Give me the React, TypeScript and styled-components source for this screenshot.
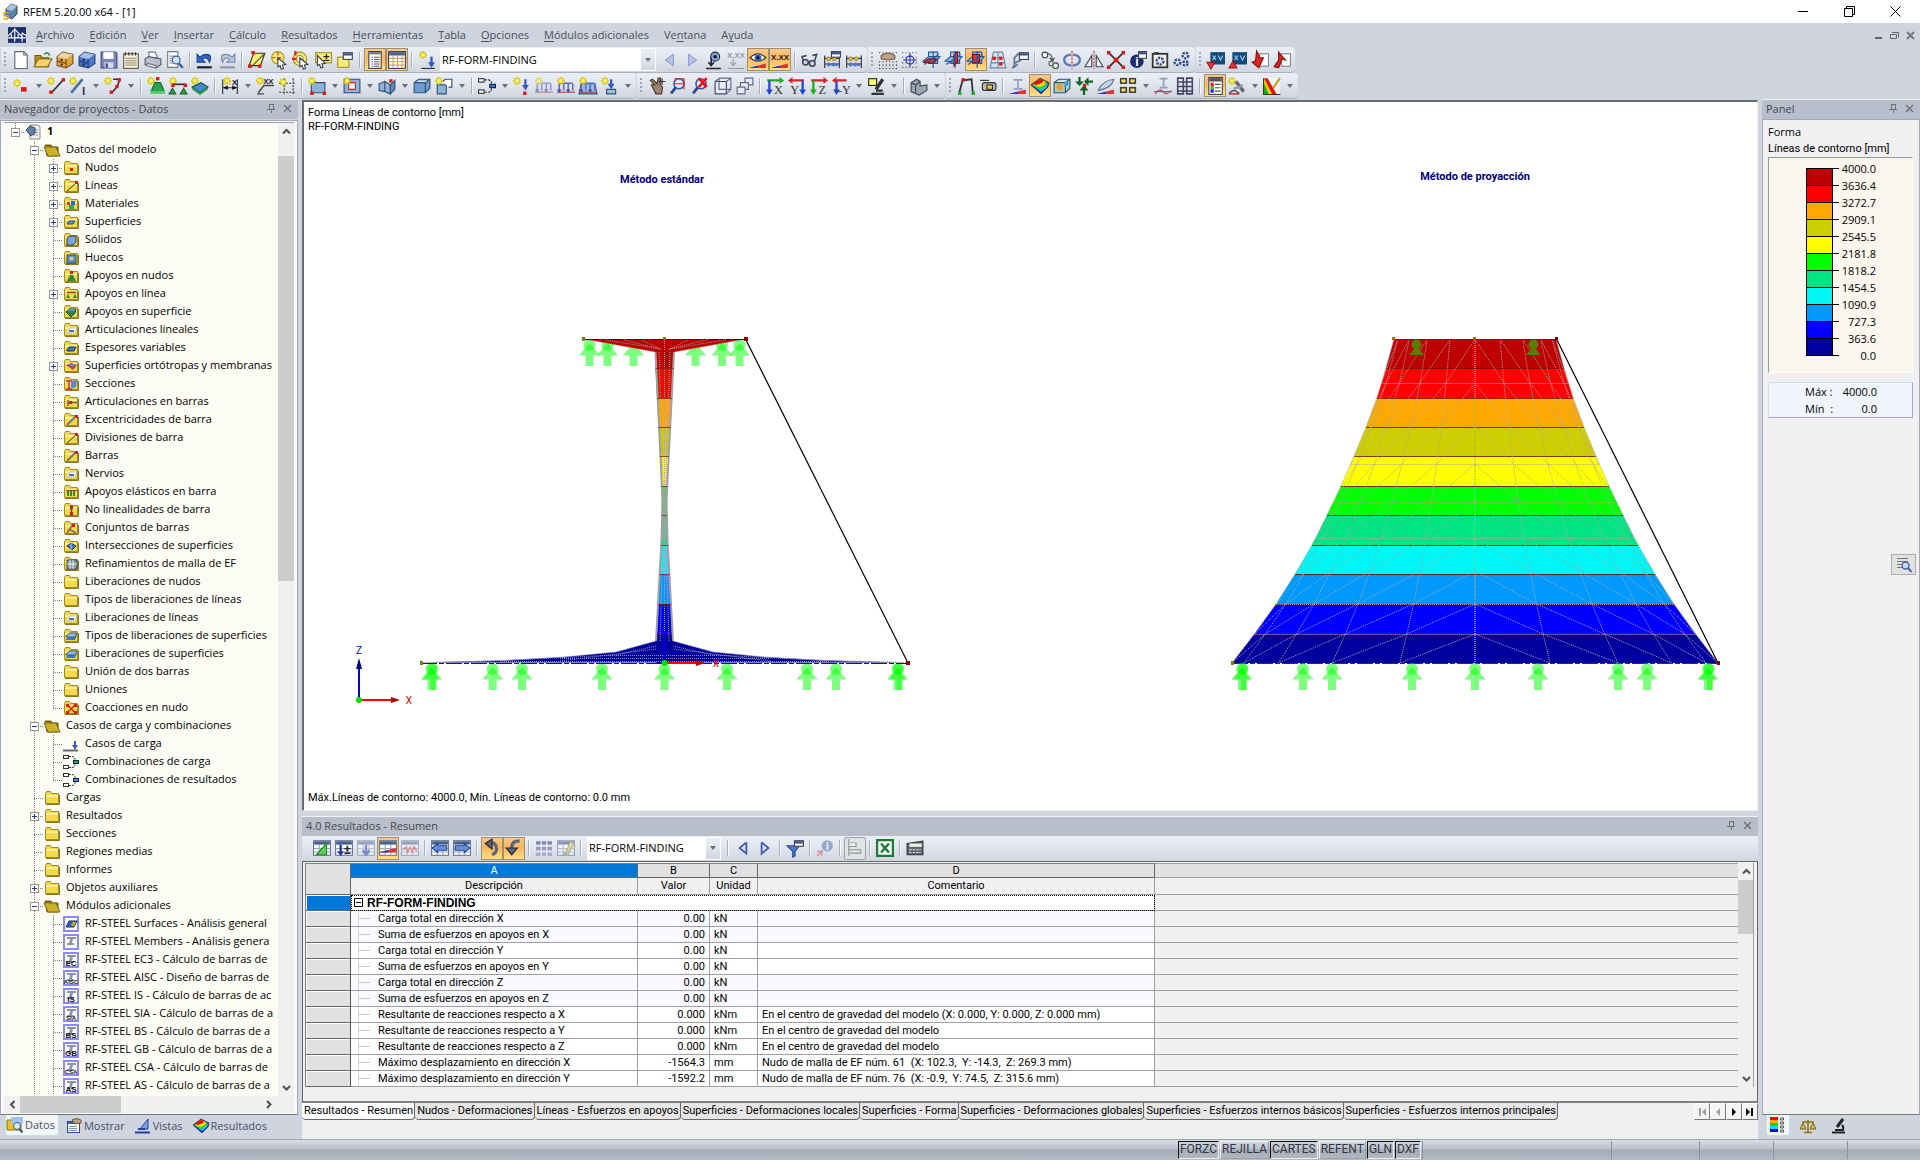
import React from 'react';
import type { ReactNode } from 'react';
import styled, { createGlobalStyle, css } from 'styled-components';

const UI = '"Open Sans", "Noto Sans", sans-serif';
const GRID = 'Roboto, "Liberation Sans", sans-serif';
const chrome = '#cfd4de';
const strip = 'linear-gradient(#e9eef7 0%, #e3e8f1 35%, #d0d5df 100%)';

const Global = createGlobalStyle`
  *, *::before, *::after { box-sizing: border-box; }
  body { margin: 0; background: ${chrome}; }
  button { font: inherit; color: inherit; background: none; border: 0; padding: 0; margin: 0; }
`;

/* ---------- icon primitives ---------- */

type Stroke = { d: string; c?: string; w?: number; dash?: string };
const L = ({ d, c = '#333', w = 1, dash }: Stroke) => (
  <path d={d} stroke={c} strokeWidth={w} strokeDasharray={dash} fill="none" />
);
const F = ({ d, c, s }: { d: string; c: string; s?: string }) => (
  <path d={d} fill={c} stroke={s} strokeWidth={s ? 1 : 0} />
);
const Star = ({ x = 0, y = 0 }: { x?: number; y?: number }) => (
  <g transform={`translate(${x} ${y})`}>
    <L d="M3.5 0v7M0 3.5h7M1 1l5 5M6 1l-5 5" c="#d8c400" w={1.3} />
    <rect x="2" y="2" width="3" height="3" fill="#fff36a" />
  </g>
);
const Node = ({ x, y, c = '#e01818' }: { x: number; y: number; c?: string }) => (
  <rect x={x} y={y} width="3" height="3" fill={c} />
);
const Lens = () => (
  <>
    <circle cx="8" cy="6" r="4.5" fill="#dfe9fb" stroke="#3a56a8" strokeWidth="1.4" />
    <L d="M5 9.5l-4 5" c="#2c4590" w={2.4} />
  </>
);
const Frame = ({ c = '#6a7890' }: { c?: string }) => (
  <>
    <rect x=".5" y="1.5" width="15" height="13" fill="#fff" stroke={c} />
    <rect x="1" y="2" width="14" height="3" fill="#47618f" />
    <L d="M1 8.5h14M1 11.5h14M5.5 5v9M10.5 5v9" c="#9aa6ba" />
  </>
);
const Tiny = ({ x = 8, y = 14, s = 8, c = '#223', children }: { x?: number; y?: number; s?: number; c?: string; children: ReactNode }) => (
  <text x={x} y={y} fontSize={s} fill={c} textAnchor="middle" fontWeight="700" fontFamily="Liberation Sans, sans-serif">{children}</text>
);
const Cabinet = ({ a, b }: { a: string; b: string }) => (
  <>
    <F d="M1 5l5-4 9 2v8l-6 4-8-2z" c={a} s={b} />
    <F d="M1 5l8 2 6-4-9-2z" c="#fff8" />
    <L d="M9 7v8M1 9l8 2" c={b} />
    <circle cx="5" cy="8" r="1" fill="#222" /><circle cx="5" cy="12" r="1" fill="#222" />
  </>
);
const Planes = ({ red }: { red: string }) => (
  <>
    <F d="M5 1h8v10H5z" c="#bcd9f2" s="#24589c" />
    <F d="M0 9l5-4h10l-4 5z" c="#8fbce4" s="#24589c" />
    <F d={red} c="#e33" s="#900" />
    <L d="M9 0v15M1 12l13-9" c="#24589c" />
  </>
);
const Support = ({ x = 8, y = 2 }: { x?: number; y?: number }) => (
  <g transform={`translate(${x} ${y})`}>
    <Node x={-1} y={-2} />
    <F d="M-2 3h5l3 7H-5z" c="#2ea44c" s="#176b2c" />
    <rect x="-6" y="10" width="13" height="3" fill="#57c873" />
  </g>
);
const AxisView = ({ t, d1, c1, d2, c2, a1, a2 }: { t: string; d1: string; c1: string; d2: string; c2: string; a1: string; a2: string }) => (
  <>
    <L d={d1} c={c1} w={2} /><L d={d2} c={c2} w={2} />
    <F d={a1} c={c1} /><F d={a2} c={c2} />
    <text x={t === 'Y' ? 6 : 11} y="15" fontSize="11" fill="#333" textAnchor="middle" fontFamily="Liberation Serif, serif">{t}</text>
  </>
);
const Rainbow = () => (
  <>
    <F d="M0 7l8-6 8 4-1 4-6 6z" c="#1030d0" />
    <F d="M1 7l7-5 7 4-1 3-5 4z" c="#10c8e8" />
    <F d="M1 7l7-5 6 3-1 3-5 3z" c="#30d020" />
    <F d="M1 6l7-4 5 2-1 3-5 2z" c="#ffe000" />
    <F d="M1 6l7-4 3 1-1 2-5 2z" c="#e01010" />
    <L d="M0 7l8-6 8 4-1 4-6 6z" c="#223" w={0.6} />
  </>
);
const Cube = ({ c = '#6d9bd0' }: { c?: string }) => (
  <>
    <F d="M1 5l4-3h10v8l-4 4H1z" c={c} s="#33506f" />
    <F d="M2 5l3-2h9l-3 2z" c="#dbe9f8" />
    <L d="M1 5h10v9M11 5l4-3" c="#33506f" />
  </>
);
const Gear = ({ x = 8, y = 8, r = 4 }: { x?: number; y?: number; r?: number }) => (
  <circle cx={x} cy={y} r={r} fill="#dfe6f2" stroke="#34508c" strokeWidth="2.2" strokeDasharray="2 1" />
);
const Combi = ({ c = '#2f7bd6' }: { c?: string }) => (
  <>
    <rect x=".5" y="1.5" width="5" height="3" fill="#fff" stroke="#333" />
    <rect x=".5" y="11.5" width="5" height="3" fill="#fff" stroke="#333" />
    <L d="M6 2.5h3q3 0 3 3.5M6 13.5h3q3 0 3-3.5" dash="2 1" />
    <rect x="10.5" y="6.5" width="5" height="3" fill={c} stroke="#124" />
  </>
);
const Loads = () => (
  <>
    <L d="M2 6v6M6 6v6M10 6v6M14 6v6M2 5.5h12" c="#5670c8" w={1.4} />
    <L d="M0 13.5h16" c="#c33" />
    <F d="M0 11h4l-2 3zM8 11h4l-2 3z" c="#3350b0" />
  </>
);
const Eye = () => (
  <>
    <F d="M1 6q7-7 14 0-7 6-14 0z" c="#fff" s="#333" />
    <circle cx="8" cy="6" r="3" fill="#2b62c8" /><circle cx="8" cy="6" r="1.2" fill="#000" />
  </>
);
const Wedge = ({ y = 11 }: { y?: number }) => (
  <>
    <F d={`M0 ${y + 4}L15 ${y}v4z`} c="#d33" />
    <F d={`M0 ${y + 4}L8 ${y + 2}v2z`} c="#2438c8" />
  </>
);
const Abacus = () => (
  <>
    <L d="M1.5 4v11M14.5 4v11M1 6.5h14M1 11.5h14" c="#333" />
    <circle cx="5" cy="7" r="1.8" fill="#e4b820" stroke="#765" strokeWidth=".5" /><circle cx="10" cy="7" r="1.8" fill="#e4b820" stroke="#765" strokeWidth=".5" />
    <circle cx="5" cy="12" r="1.8" fill="#4f74c8" /><circle cx="9" cy="12" r="1.8" fill="#4f74c8" /><circle cx="12" cy="12" r="1.5" fill="#4f74c8" />
  </>
);
const Folder = ({ open }: { open?: boolean }) => open ? (
  <>
    <F d="M1 3h6l1 2h6v9H3z" c="#8f7a14" s="#6d5c0c" />
    <F d="M0 5h12l4 9H4z" c="#cdb02a" s="#7c6a10" />
  </>
) : (
  <>
    <F d="M1.5 3.5l1-2h4l1 2h7v10h-13z" c="#f3da4c" s="#a08a24" />
    <F d="M2 5h12v2H2z" c="#fbee9a" />
    <L d="M2 14.5h13.5V5" c="#8c7718" />
  </>
);
const ModuleBox = ({ t }: { t?: string }) => (
  <>
    <rect x="1" y="1" width="14" height="14" fill="#fff" stroke="#8a8af0" strokeWidth="2" />
    {t === undefined ? (
      <><F d="M3 11l3-6h8l-3 6z" c="#2fa08c" s="#224" /><F d="M4 10l2-4h3l-2 4z" c="#3050d0" /><F d="M10 6h3l-2 4h-2z" c="#e0b020" /></>
    ) : (
      <>
        <F d="M4 3h9v2h-3l-1 4h2v2H4V9h2l1-4H4z" c="#8a96aa" />
        {t && <Tiny y={14} s={t.length > 2 ? 6 : 8} c="#111">{t}</Tiny>}
      </>
    )}
  </>
);

const icons: Record<string, ReactNode> = {
  app: <><F d="M4 5l5-5 6 2v8l-5 5-6-3z" c="#5f82a8" s="#33475c" /><F d="M4 5l5-5 6 2-5 5z" c="#a9c4dc" /><Tiny x={4} y={16} s={11} c="#d8a800">5</Tiny></>,
  bridge: <><rect y="1" width="16" height="14" fill="#1c2f6e" /><L d="M0 10.5h16M6 2v12M12.5 6v8M6 3L0 9M6 3l6 6M12.5 6l4 3M3 7v3M9 7v3" c="#fff" /></>,
  new: <><F d="M2.5.5h8l3 3v12h-11z" c="#fff" s="#667" /><L d="M10.5.5v3h3" c="#667" /></>,
  open: <><F d="M1 4h5l1 2h6v8H1z" c="#b8901c" s="#70560c" /><F d="M0 14l4-7h12l-4 7z" c="#f2d468" s="#8c6f18" /><L d="M9 3q3-3 5 1" c="#3a9a3a" w={1.6} /></>,
  cabY: <Cabinet a="#e0a43c" b="#7a5212" />,
  cabB: <Cabinet a="#4c78cc" b="#1f3c80" />,
  save: <><F d="M1 1h13l1 1v13H1z" c="#7a86b8" s="#454f80" /><rect x="3" y="1" width="9" height="6" fill="#fff" /><rect x="4" y="10" width="8" height="5" fill="#d3d8ea" /><rect x="5" y="11" width="2" height="4" fill="#454f80" /></>,
  note: <><rect x="1.5" y="2.5" width="13" height="13" fill="#f5efdc" stroke="#665c48" /><L d="M3 6.5h10M3 8.5h10M3 10.5h10M3 12.5h10" c="#a59a80" /><L d="M3 1v3M6 1v3M9 1v3M12 1v3" /></>,
  print: <><F d="M4 1h6l2 5H5z" c="#fff" s="#778" /><F d="M1 7l3-2 11 2v5l-4 3-10-3z" c="#b9c0cc" s="#556" /><F d="M3 11l8 2-1 2-8-2z" c="#f7f7f7" s="#778" /></>,
  preview: <><F d="M1.5.5h9v14h-9z" c="#fff" s="#778" /><L d="M3 4.5h5M3 6.5h4M3 8.5h4M3 10.5h4" c="#99a" /><circle cx="9" cy="8" r="3.5" fill="#cfe2f6" stroke="#2d5aa0" /><L d="M11.5 11l3.5 4" c="#2d5aa0" w={2} /></>,
  undo: <><F d="M1 3v7h7L5.5 7.5Q10 4 12 10 15 3 9 3 6 3 3.5 5.5z" c="#3467c8" s="#1b3f8c" /><L d="M1 14.5h13" c="#223" w={2} /></>,
  redo: <><F d="M15 3v7H8l2.5-2.5Q6 4 4 10 1 3 7 3q3 0 5.5 2.500z" c="#b9c8e2" s="#7388ac" /><L d="M2 14.5h13" c="#99a" w={2} /></>,
  para: <><F d="M5 2h10l-4 11H1z" c="#f8f06a" s="#333" /><L d="M2 15L15 2" c="#555" /><Node x={3} y={0} /><Node x={0} y={12} /><Node x={9} y={12} /></>,
  selA: <><circle cx="7" cy="6" r="5.5" fill="#f8ee78" stroke="#a89020" /><L d="M7 1v9M2 6h10" c="#d22" dash="3 2" /><F d="M7 6l7 6-3 .5 1 3-2 .5-1-3-2 1z" c="#fff" s="#444" /></>,
  selB: <><circle cx="7" cy="7" r="6" fill="#f8ee78" stroke="#a89020" /><circle cx="7" cy="7" r="3" fill="#fff" stroke="#a89020" /><L d="M3 0v4M0 7h4" c="#d22" w={2} /><F d="M7 6l7 6-3 .5 1 3-2 .5-1-3-2 1z" c="#fff" s="#444" /></>,
  selC: <><rect x="1.5" y="1.5" width="14" height="9" fill="#f8ee78" stroke="#a89020" /><Tiny x={11} y={9} s={10}>±</Tiny><F d="M3 4l7 7-3 .5 1 3-2 .5-1-3-2 1z" c="#fff" s="#444" /></>,
  selD: <><rect x="1.5" y="5.5" width="10" height="9" fill="#f8ee78" stroke="#a89020" /><rect x="6.5" y="1.5" width="8" height="6" fill="#fff" stroke="#445" /><rect x="7" y="2" width="7" height="2" fill="#334d90" /></>,
  listV: <><rect x="2.5" y=".5" width="11" height="15" fill="#fff" stroke="#444" /><rect x="3" y="1" width="10" height="2" fill="#777" /><L d="M5 5.5h1M5 7.5h1M5 9.5h1M5 11.5h1M5 13.5h1" c="#22a" /><L d="M7 5.5h5M7 7.5h5M7 9.5h5M7 11.5h5M7 13.5h5" c="#555" /></>,
  grid: <><rect x=".5" y=".5" width="15" height="15" fill="#fff" stroke="#445" /><rect x="1" y="1" width="14" height="3" fill="#4a6296" /><L d="M1 6.5h14M1 9.5h14M1 12.5h14M4.5 4v11M8.5 4v11M12.5 4v11" c="#c8a860" /></>,
  newLoad: <><Star x={1} y={0} /><L d="M3 15.5h12" /><L d="M12 5v7" c="#35c" w={2} /><F d="M9 10h6l-3 5z" c="#35c" /></>,
  prev: <F d="M11 3v10L4 8z" c="#b7c5e6" s="#8fa0cc" />,
  next: <F d="M5 3v10l7-5z" c="#b7c5e6" s="#8fa0cc" />,
  prevD: <L d="M11 3L5 8l6 5V3" c="#3a5cb4" w={1.6} />,
  nextD: <L d="M5 3l6 5-6 5V3" c="#3a5cb4" w={1.6} />,
  eyeLoad: <><circle cx="9" cy="5" r="4" fill="#7ea2dc" stroke="#234" /><circle cx="9" cy="5" r="1.5" fill="#112" /><L d="M5.5 6v6M3 10l2.5 3L8 10M1 15.5h13" c="#223" w={1.4} /></>,
  xxxGray: <><Tiny y={6} s={7} c="#999">X.XX</Tiny><L d="M5.5 7v6M3 10l2.5 3L8 10M1 15.5h14" c="#999" /></>,
  eyeRes: <><Eye /><Wedge /></>,
  xxxRes: <><Tiny y={8} s={7}>X.XX</Tiny><Wedge /></>,
  glasses: <><circle cx="4" cy="10" r="2.5" fill="#c9d4ec" stroke="#445" strokeWidth="1.4" /><circle cx="10" cy="11" r="2.5" fill="#c9d4ec" stroke="#445" strokeWidth="1.4" /><L d="M2 9l-1-4 4-1M12 9l2-6-4 1" c="#445" w={1.4} /></>,
  abacusWin: <><Abacus /><rect x="7.5" y=".5" width="8" height="5" fill="#fff" stroke="#445" /><rect x="8" y="1" width="7" height="2" fill="#334d90" /></>,
  abacus: <Abacus />,
  handGrid: <><L d="M0 1.5h16M0 9.5h16M0 12.5h16M0 15.5h16" c="#333" dash="1 2" /><F d="M2 4q6-4 12 0v3l-6 1-6-1z" c="#c0a488" s="#6b543e" /></>,
  snap: <><L d="M1 1.5h14M1 5.5h14M1 10.5h14M1 14.5h14" c="#555" dash="1 2" /><circle cx="8" cy="8" r="3.5" fill="#eef" stroke="#23a" /><L d="M8 2v12M2 8h12" c="#23a" /></>,
  planeA: <Planes red="M1 10l4-3h7l-3 4z" />,
  planeB: <Planes red="M8 3l3-2v9l-3 3z" />,
  planeC: <Planes red="M5 3h6v7H5z" />,
  guide: <><F d="M4 1h8l3 14H1z" c="#d5e6f2" s="#6688a0" /><L d="M3 6h10M2 10.5h12M8 1v14" c="#6688a0" /><Node x={3} y={5} /><Node x={9} y={10} /><Node x={9} y={5} /></>,
  lineGrid: <><L d="M3 15V6l4-4M3 11l6-3M1 15l5-3" c="#5a7a98" w={1.6} /><rect x="7.5" y="1.5" width="8" height="6" fill="#fff" stroke="#445" /><rect x="8" y="2" width="7" height="2" fill="#334d90" /></>,
  copy: <><circle cx="3.5" cy="3.5" r="2.5" fill="#fff" stroke="#444" /><circle cx="13" cy="13" r="2.5" fill="#eee" stroke="#444" /><L d="M6 2q4 1 4 6M8 6l2 3 2-3" c="#444" /><circle cx="9" cy="11" r="2" fill="#ddd" stroke="#666" /></>,
  rotate: <><L d="M7 3Q1 4 1 8t6 5M9 3q6 1 6 5t-6 5" c="#5877b8" w={2} /><L d="M8 0v16" c="#e22" dash="2 1" /></>,
  mirror: <><F d="M6 4v10H0z" c="#eef" s="#445" /><F d="M10 4v10h6z" c="#eef" s="#445" /><L d="M8 0v16" c="#e22" dash="2 1" /></>,
  redX: <><L d="M1 1l14 14M15 1L1 15" c="#333" w={1.5} /><Node x={0} y={0} /><Node x={13} y={0} /><Node x={0} y={13} /><Node x={13} y={13} /><rect x="6" y="6" width="4" height="4" fill="#e11" /></>,
  info: <><circle cx="7" cy="9" r="6" fill="#1f2b70" /><Tiny x={7} y={13} s={11} c="#fff">i</Tiny><rect x="8.5" y=".5" width="7" height="6" fill="#fff" stroke="#445" /><rect x="9" y="1" width="6" height="2" fill="#334d90" /></>,
  camera: <><rect x="1.5" y="2.5" width="13" height="12" fill="#f3efe6" stroke="#333" strokeWidth="1.6" /><Gear x={8} y={9} r={3} /><rect x="3" y="1" width="4" height="2" fill="#333" /></>,
  gears: <><Gear x={4} y={10} r={2.5} /><Gear x={11} y={4} r={2.5} /><Gear x={11} y={11} r={2} /></>,
  ifcA: <><rect x="3" y="1" width="13" height="11" fill="#174a78" /><L d="M5 4l3 4M8 4L5 8M10 4l2 4 2-4" c="#9cf" /><F d="M0 10h7l-3.5 6z" c="#e33" s="#a11" /></>,
  ifcB: <><rect x="3" y="1" width="13" height="11" fill="#174a78" /><L d="M5 4l3 4M8 4L5 8M10 4l2 4 2-4" c="#9cf" /><F d="M0 15h7L3.5 9z" c="#e33" s="#a11" /></>,
  impA: <><rect x="7.5" y="2.5" width="8" height="11" fill="#fff" stroke="#888" /><F d="M5 0l3 6h3l-4 9-6-5 3-1z" c="#d22" s="#811" /></>,
  impB: <><rect x="7.5" y="2.5" width="8" height="11" fill="#fff" stroke="#888" /><F d="M5 1l6 7-3-1-3 8-4-1 4-6z" c="#d22" s="#811" /></>,

  newNode: <><Star x={1} y={2} /><rect x="8" y="9" width="5" height="4" fill="#e01818" /></>,
  newLine: <><Star /><L d="M4 14L14 3" w={1.5} /><Node x={2} y={12} /><Node x={13} y={1} /></>,
  newMember: <><Star /><L d="M2 14L12 2" c="#7da0d0" w={3} /><L d="M2 14L12 2" c="#345" /><Tiny x={13} y={16} s={9} c="#225">I</Tiny></>,
  newPoly: <><Star /><L d="M8 2h6l-2 6-5 6" c="#333" w={1.4} /><Node x={12} y={1} /><Node x={10} y={7} /><Node x={5} y={12} /></>,
  supNode: <><Support x={9} /><Star /></>,
  supLine: <><Star /><L d="M3 6.5h12" w={1.5} /><Node x={2} y={6} /><Node x={13} y={6} /><F d="M3 10l3 5H0zM13 10l3 5h-6z" c="#2ea44c" s="#176b2c" /></>,
  supSurf: <><F d="M1 9l8-4 6 4-7 5z" c="#3e8ed0" s="#245" /><F d="M1 9l7 5v2L1 11zM8 14l7-5v2l-7 5z" c="#2ea44c" /><Star /></>,
  dim: <><L d="M1.5 2v13M14.5 2v13M2 9.5h12" /><F d="M2 9.5l4-2v4zM14 9.5l-4-2v4z" c="#111" /><Star x={2} y={0} /><Tiny x={12} y={7} s={7}>X</Tiny></>,
  dimXX: <><Star /><Tiny x={11} y={6} s={7}>XX</Tiny><L d="M2 14L7 7.5h9M1 15h6" c="#445" w={1.3} /></>,
  gridNew: <><L d="M5.5 1v15M13.5 1v15M1 5.5h15M1 13.5h15" c="#444" dash="2 1" /><Star x={1} y={1} /></>,
  surf: <><F d="M3 5h12v9H3z" c="#8fb4dc" s="#33506f" /><Star /><Node x={2} y={13} /><Node x={13} y={13} /></>,
  opening: <><F d="M1 2h14v12H1z" c="#8fb4dc" s="#33506f" /><F d="M5 5h6v6H5z" c="#fff" s="#d22" /><Star /></>,
  fold: <><F d="M1 6l5-2v9l-5-1zM6 4l5 3v8l-5-2z" c="#8fb4dc" s="#33506f" /><F d="M11 7l4-4v8l-4 4z" c="#5f88bc" s="#33506f" /><Node x={10} y={2} /></>,
  solid: <Cube />,
  solidNew: <><F d="M2 7h8v8H2z" c="#8fb4dc" s="#33506f" /><F d="M7 4l2-2h6v7h-3" c="#fff" s="#33506f" /><Star /></>,
  combi: <Combi />,
  loadNode: <><Star /><L d="M11 2v7" c="#35c" w={2} /><F d="M8 7h6l-3 5z" c="#35c" /><Node x={9} y={13} /></>,
  loadA: <g opacity=".6"><Loads /><Star /></g>,
  loadB: <><Loads /><Star /></>,
  loadC: <><F d="M2 6h12l2 9H0z" c="#9cc0e4" s="#33506f" /><Loads /><Star /></>,
  loadD: <><Star /><L d="M9 2v6" c="#35c" w={2} /><F d="M6 6h6L9 11z" c="#35c" /><F d="M5 11h8v4H5z" c="#9cc0e4" s="#33506f" /></>,
  hand: <><F d="M3 7l3 0-4-4 2-1 4 4 1-5 2 0v6l2 2-1 6H7z" c="#9a8470" s="#4c3c2e" /><L d="M12.5 1v6M9.5 4h6" /></>,
  zoomBox: <><Lens /><L d="M4 1.5h9M12.5 1v10M12 6H4" c="#d22" /></>,
  zoomX: <><Lens /><L d="M6 1l7 8M13 1L6 9" c="#e11" w={2.2} /></>,
  wire: <><F d="M1 4h10v11H1z" c="#e6edf8" s="#446" /><L d="M4.5 1v10h11M1 4l4-3h10v10l-4 4M11 4l4-3" c="#668" /></>,
  wires: <><F d="M8 1h7v6H8z" c="#e6edf8" s="#668" /><F d="M4 5h7v6H4z" c="#e6edf8" s="#668" /><F d="M1 9h7v6H1z" c="#e6edf8" s="#668" /></>,
  vx: <AxisView t="X" d1="M1 3h12" c1="#2a2" a1="M12 0l4 3-4 3z" d2="M3 3v10" c2="#24c" a2="M0 11h6l-3 5z" />,
  vy: <AxisView t="Y" d1="M3 3h11" c1="#d22" a1="M4 0L0 3l4 3z" d2="M13 3v10" c2="#24c" a2="M10 11h6l-3 5z" />,
  vz: <AxisView t="Z" d1="M1 3h12" c1="#d22" a1="M12 0l4 3-4 3z" d2="M3 3v10" c2="#2a2" a2="M0 11h6l-3 5z" />,
  vmy: <AxisView t="-Y" d1="M4 3h9" c1="#d22" a1="M4 0L0 3l4 3z" d2="M4 3v10" c2="#24c" a2="M1 11h6l-3 5z" />,
  scope: <><rect x="1.5" y="1.5" width="7" height="6" fill="#ff6" stroke="#222" /><L d="M14 2L8 11" c="#333" w={3} /><L d="M8 12h6M4 15h11" c="#333" w={2} /></>,
  block: <><F d="M1 5l5-3 3 2v4l6-1v5l-7 4-7-3z" c="#9aa8b4" s="#445" /><L d="M1 5l4 2v8M5 7l4-3" c="#445" /></>,
  frameN: <><L d="M2 14L5 3l8-1 1 12" w={1.6} /><Node x={1} y={13} c="#2a2" /><Node x={13} y={13} c="#2a2" /><Node x={4} y={1} /></>,
  roller: <><rect x="3" y="5" width="12" height="7" rx="2" fill="#bbb" stroke="#333" /><rect x="7" y="7" width="5" height="4" fill="#d8d030" stroke="#333" /><L d="M1 3h8" /></>,
  deform: <><L d="M4 2.5h8M8 3v7M4 10.5h8" c="#8fa0c0" w={1.5} /><Wedge /></>,
  rainbow: <Rainbow />,
  cubeRes: <><Cube c="#9fd8b8" /><circle cx="6" cy="9" r="3" fill="#e8a040" /><circle cx="12" cy="6" r="2" fill="#40a0e0" /></>,
  reaction: <><L d="M8 16V9" c="#162" w={2} /><F d="M4 12h8L8 7zM0 4h8L4 8zM12 0v8l-4-4z" c="#162" /><L d="M4 0v5M11 4h5" c="#162" w={2} /><Node x={7} y={6} /></>,
  slice: <><F d="M1 12Q5 3 15 2q-2 8-14 10z" c="#c6d4e8" s="#678" /><Wedge /></>,
  quad: <><rect x="1.5" y="1.5" width="5" height="4" fill="#f0dc70" stroke="#443" strokeWidth="1.4" /><rect x="9.5" y="1.5" width="5" height="4" fill="#f0dc70" stroke="#443" strokeWidth="1.4" /><rect x="1.5" y="9.5" width="5" height="4" fill="#f0dc70" stroke="#443" strokeWidth="1.4" /><rect x="9.5" y="9.5" width="5" height="4" fill="#f0dc70" stroke="#443" strokeWidth="1.4" /></>,
  moment: <><L d="M5 1.5h7M8.5 2v7M5 9.5h7" c="#8fa0c0" w={1.5} /><L d="M0 13h16" c="#46a" /><L d="M1 15q4-6 7-2t7-1" c="#c44" /></>,
  cells: <><L d="M1.5 1h5v14h-5zM9.5 1h5v14h-5zM1 4.5h14M1 8.5h14M1 12.5h14" c="#446" w={1.4} /></>,
  panel: <><rect x="2.5" y=".5" width="12" height="15" fill="#fff" stroke="#445" /><rect x="3" y="1" width="11" height="3" fill="#555" /><rect x="4" y="5" width="3" height="3" fill="#e22" /><rect x="4" y="8" width="3" height="3" fill="#2c2" /><rect x="4" y="11" width="3" height="3" fill="#22e" /><L d="M8 6.5h5M8 9.5h5M8 12.5h5" c="#555" /></>,
  starTool: <><Star /><L d="M7 4l7 9" c="#667" w={3} /><L d="M5 10q5 0 8-3" c="#99a" w={2} /><L d="M1 15q4-6 9 0" c="#556" w={1.5} /><L d="M1 15h9" c="#c44" w={1.5} /></>,
  colors: <><rect x="1" y="1" width="14" height="14" fill="#f4f4f4" /><F d="M1 1l8 14H5L1 8z" c="#f0d000" /><F d="M1 1h3l8 14H8z" c="#d11" /><F d="M1 6l4 9H1z" c="#1a1" /><L d="M15 1L9 10" c="#c8a020" w={2} /><L d="M.5 1v14.5h15" /></>,

  tA: <><Frame /><F d="M12 4v10H3z" c="#5cd25c" s="#282" /></>,
  tB: <><Frame /><Tiny x={11} y={13} s={11}>±</Tiny><L d="M5 5v7" c="#23a" w={2} /><F d="M2 11h6l-3 4z" c="#23a" /></>,
  tC: <g opacity=".5"><Frame /><L d="M8 5v8M5 10l3 4 3-4" c="#23a" w={2} /></g>,
  tD: <><Frame /><Wedge y={8} /></>,
  tE: <g opacity=".5"><Frame /><L d="M2 10l2-3 2 5 2-5 2 5 2-5 2 4" c="#d22" /></g>,
  tL: <><Frame /><F d="M1 8l5-4v2h8v4H6v2z" c="#6d8fd8" s="#234a98" /></>,
  tR: <><Frame /><F d="M15 8l-5-4v2H2v4h8v2z" c="#6d8fd8" s="#234a98" /></>,
  hookA: <><L d="M6 3q6 0 6 6 0 3-4 5" c="#5c6880" w={3} /><F d="M2 4l6-4v9z" c="#5c6880" s="#223" /></>,
  hookB: <><L d="M13 2Q6 1 6 8" c="#5c6880" w={3} /><F d="M1 8h10l-5 6z" c="#5c6880" s="#223" /></>,
  rowsB: <g opacity=".6"><rect x="1" y="2" width="14" height="3" fill="#448" /><rect x="1" y="7" width="14" height="3" fill="#66a" /><rect x="1" y="12" width="14" height="3" fill="#88b" /><L d="M5.5 2v13M10.5 2v13" c="#fff" /></g>,
  rowsY: <g opacity=".6"><Frame /><F d="M12 2l3 2-5 9-5 1 3-2z" c="#e4d060" s="#886" /></g>,
  filter: <><F d="M1 6h11L8 11v4l-2 1v-5z" c="#4f7cc8" s="#234a98" /><rect x="7.5" y="1.5" width="8" height="5" fill="#fff" stroke="#445" /><rect x="8" y="2" width="7" height="2" fill="#334d90" /></>,
  infoG: <g opacity=".5"><circle cx="10" cy="6" r="5" fill="#56a" /><Tiny x={10} y={10} s={10} c="#fff">i</Tiny><L d="M1 15l5-5M1 11h4v4" c="#c33" /></g>,
  chart: <g opacity=".6"><L d="M2.5 0v15M2 3.5h7v3H2M2 9.5h11v3H2" c="#666" /><rect x="3" y="4" width="5" height="2" fill="#fff" /></g>,
  excel: <><rect x="1" y="1" width="14" height="14" fill="#fff" stroke="#1c7a34" strokeWidth="2" /><L d="M4.5 4l7 8M11.5 4l-7 8" c="#1c7a34" w={2.2} /></>,
  calc: <><F d="M1 4l14-2v12H1z" c="#60666e" s="#333" /><rect x="3" y="4" width="11" height="3" fill="#e6eee6" /><L d="M3 9.5h10M3 12h10" c="#eee" dash="2 1" /></>,

  root: <><F d="M5 1h8l2 2v12H5z" c="#f2f2f2" s="#888" /><L d="M8 6h5M8 8.5h5M8 11h5" c="#999" /><F d="M1 6l4-4 5 2v5L6 12z" c="#5f82a8" s="#33475c" /></>,
  fOpen: <Folder open />,
  loadCase: <><L d="M0 14.5h15" c="#667" w={2} /><L d="M12 5v6" c="#3a5fb8" w={2} /><F d="M9 9h6l-3 5z" c="#3a5fb8" /></>,
  combG: <Combi c="#22b14c" />,
  combB: <Combi c="#4f93e8" />,
  mDatos: <><F d="M0 3h14v10H0z" c="#f0c030" s="#8c7018" /><rect x="4" y="0" width="12" height="7" fill="#9cc4f0" /><circle cx="10" cy="9" r="3.5" fill="#dcebfa" stroke="#357" /><L d="M12.5 12l3 3.5" c="#357" w={2} /></>,
  mMostrar: <><rect x="1.5" y="3.5" width="12" height="11" fill="#fff" stroke="#2c4c90" /><rect x="2" y="4" width="11" height="2" fill="#3a62b0" /><L d="M3 8.5h8M3 10.5h8M3 12.5h8" c="#69b" /><F d="M6 2q5-3 9 0v3l-6 1z" c="#c0a080" s="#6b543e" /></>,
  mVistas: <><F d="M13 1L5 11h8z" c="#7da0ec" s="#2440a0" /><L d="M0 14.5h15M3 11h7" c="#2440a0" w={2} /></>,
  scale: <g><L d="M8 2v12M2 4h12M4 14.5h8" c="#8a7210" w={1.6} /><F d="M3 5l3 6H0zM13 5l3 6h-6z" c="#d8bc40" s="#7a6410" /></g>,
  micro: <><L d="M13 1L7 9" c="#222" w={3} /><L d="M5 12h8q1-3-1-5" c="#222" w={2} /><L d="M2 14.5h13" c="#222" w={2} /></>,
  legend: <><rect x="0" y="0" width="8" height="3" fill="#f00" /><rect x="0" y="3" width="8" height="3" fill="#fa0" /><rect x="0" y="6" width="8" height="3" fill="#0d0" /><rect x="0" y="9" width="8" height="3" fill="#0df" /><rect x="0" y="12" width="8" height="3" fill="#00f" /><L d="M10.5 1h3v2h-3zM10.5 5h3v2h-3zM10.5 9h3v2h-3zM10.5 13h3v2h-3z" c="#555" /></>,
  listLens: <><L d="M1 1.5h11M1 4.5h11M1 7.5h6M1 10.5h6" c="#777" /><circle cx="9.5" cy="8.5" r="3.5" fill="#c7d8f4" stroke="#4a64a8" strokeWidth="1.4" /><L d="M12 11l3.5 4" c="#4a64a8" w={2} /></>,
};

/* small emblems drawn over the yellow tree folders */
const marks: Record<string, ReactNode> = {
  none: null,
  node: <Node x={7} y={8} />,
  line: <><L d="M4 13L13 5" /><Node x={12} y={3} /></>,
  mat: <><rect x="4" y="6" width="3" height="3" fill="#e33" /><rect x="8" y="5" width="4" height="4" fill="#36c" /><rect x="6" y="9" width="5" height="4" fill="#2a6" /></>,
  surf: <F d="M4 10l2-3h6l-2 3z" c="#5c94d8" s="#346" />,
  solid: <F d="M4 6l3-2h6v6l-3 3H4z" c="#7ba6dc" s="#345" />,
  hole: <><F d="M4 5h9v8H4z" c="#5c94d8" s="#345" /><rect x="7" y="7" width="3" height="3" fill="#f3da4c" /></>,
  supN: <><F d="M7 7h3l3 6H4z" c="#2a8c3c" /><Node x={7} y={3} /></>,
  supL: <><L d="M4 6.5h9" c="#a33" w={1.5} /><F d="M5 8l2 4H3zM12 8l2 4h-4z" c="#2a8c3c" /></>,
  supS: <><F d="M3 8l3-3h7l-1 4-4 4z" c="#2a8c3c" s="#143" /><F d="M4 7l2-2h7l-2 2z" c="#5c94d8" /></>,
  hinge: <><F d="M3 11l4-5h7l-2 5z" c="#fff" s="#bbb" /><L d="M6 9h5" c="#56a" w={2} /></>,
  slab: <F d="M4 10l2-3h7l-2 4H4z" c="#3f78c0" s="#235" />,
  ortho: <><F d="M3 7l5-2 6 2-4 5z" c="#d33" /><F d="M4 6h9l-3 3z" c="#5c94d8" /></>,
  section: <><L d="M3 5h6M6 5v8M3 13h6" c="#c33" w={1.5} /><F d="M8 5l6-1-1 7-5 2z" c="#5c84e0" /></>,
  rod: <><L d="M4 13L13 4" c="#777" w={2.2} /><Node x={12} y={3} /></>,
  rodH: <><L d="M5 8.500h9M5 6v6" c="#665" w={1.5} /><Node x={6} y={7} /></>,
  elastic: <><L d="M3 6.5h11" c="#a33" /><L d="M5 7v5M8 7v5M11 7v5" c="#2a8c3c" w={2} /></>,
  nonlin: <><L d="M8.5 3v11" c="#446" w={1.5} /><Node x={7} y={4} /><Node x={7} y={10} /></>,
  set: <><L d="M4 13L10 4M6 9l7 4" c="#866" w={1.6} /><Node x={9} y={4} /></>,
  inter: <><F d="M4 8l4-3 5 3-4 4z" c="#3f78c0" s="#235" /><L d="M8 4v9" c="#9cf" /></>,
  mesh: <><F d="M4 4h10v9H4z" c="#89a" s="#345" /><L d="M7 4v9M10 4v9M4 8h10" c="#eee" /></>,
  relS: <><F d="M3 11l4-4h7l-2 5H3z" c="#3f78c0" /><F d="M3 8l4-3h7l-2 4H3z" c="#8fc0ec" s="#457" /></>,
  coac: <><L d="M4 4l8 9M13 4l-9 9" c="#d22" w={1.6} /><Node x={3} y={4} /><Node x={11} y={4} /><Node x={3} y={11} /><Node x={11} y={11} /></>,
};

const Svg = styled.svg<{ $s: number }>`
  width: ${p => p.$s}px;
  height: ${p => p.$s}px;
  flex: none;
  display: block;
  overflow: visible;
`;
const Icon = ({ n, s = 16 }: { n: string; s?: number }) => (
  <Svg $s={s} viewBox="0 0 16 16" aria-hidden="true">
    {n.startsWith('f:') ? <><Folder />{marks[n.slice(2)]}</> : n.startsWith('m:') ? <ModuleBox t={n.slice(2)} /> : n === 'm' ? <ModuleBox /> : icons[n]}
  </Svg>
);

/* ---------- window frame ---------- */

const Window = styled.div`
  height: 100vh;
  min-height: 700px;
  display: flex;
  flex-direction: column;
  overflow: hidden;
  background: ${chrome};
  font: 11px/16px ${UI};
  color: #000;
`;
const TitleBar = styled.header`
  height: 23px;
  flex: none;
  display: flex;
  align-items: center;
  gap: 5px;
  padding: 0 19px 0 2px;
  background: #fff;
`;
const Title = styled.h1`
  margin: 0;
  font: inherit;
  flex: 1;
`;
const WindowButtons = styled.div<{ $gap: number }>`
  display: flex;
  align-items: center;
  gap: ${p => p.$gap}px;
`;
const Plain = styled.button`
  display: flex;
  align-items: center;
  justify-content: center;
`;
const MenuBar = styled.nav`
  height: 24px;
  flex: none;
  display: flex;
  align-items: center;
  padding: 0 5px 0 4px;
  color: #4a4f59;
`;
const MenuItem = styled.button`
  padding: 0 7px 0 8px;
  height: 20px;
  u { text-underline-offset: 2px; }
`;
const MenuLogo = styled.span`
  display: flex;
  margin: 0 2px 0 4px;
`;
const Spacer = styled.span` flex: 1; `;

const Grip = styled.span`
  width: 4px;
  height: 16px;
  margin: 0 2px 0 3px;
  flex: none;
  background: radial-gradient(circle at 1px 1px, #9ea5b3 1px, transparent 1px) 0 0 / 4px 4px;
`;

/* ---------- toolbars ---------- */

const ToolRow = styled.div`
  display: flex;
  gap: 1px;
  height: 26px;
  flex: none;
  padding-left: 1px;
`;
const ToolStrip = styled.div`
  display: flex;
  align-items: center;
  height: 26px;
  padding-right: 2px;
  background: ${strip};
  border-bottom: 1px solid #aab0bd;
  border-radius: 0 4px 4px 0;
`;
const ToolButton = styled.button<{ $on?: boolean; $off?: boolean }>`
  width: 22px;
  height: 23px;
  flex: none;
  display: flex;
  align-items: center;
  justify-content: center;
  border: 1px solid transparent;
  ${p => p.$on && css`
    border-color: #9c8f72;
    background: linear-gradient(#fbc88a, #fcb65c 45%, #ffe184);
  `}
  ${p => p.$off && css`
    border-color: #9aa2a6;
    border-radius: 2px;
    background: #dfe4e4;
  `}
`;
const Drop = styled.button`
  width: 13px;
  height: 22px;
  flex: none;
  display: flex;
  align-items: center;
  justify-content: center;
`;
const Sep = styled.span`
  width: 2px;
  height: 16px;
  margin: 0 3px;
  flex: none;
  border-left: 1px solid #a9afbb;
  border-right: 1px solid #f6f8fb;
`;
const Combo = styled.span<{ $w: number }>`
  display: flex;
  width: ${p => p.$w}px;
  height: 23px;
  margin: 0 3px 0 2px;
  background: #fff;
  border: 1px solid #fff;
`;
const Select = styled.select`
  flex: 1;
  min-width: 0;
  appearance: none;
  border: 0;
  padding: 0 1px;
  background: #fff;
  color: #000;
  font: 11px/16px ${UI};
`;
const ComboArrow = styled.span`
  width: 14px;
  display: flex;
  align-items: center;
  justify-content: center;
  background: ${strip};
`;
const Caret = () => <svg width="6" height="4" aria-hidden="true"><path d="M0 0h6L3 4z" fill="#6b7078" /></svg>;

const ToolItems = ({ spec }: { spec: string }) => (
  <>
    {spec.split(' ').map((t, i) => {
      if (t === '|') return <Sep key={i} />;
      if (t === ':') return <Grip key={i} />;
      if (t === 'v') return <Drop key={i} aria-label="Más opciones"><Caret /></Drop>;
      if (t.startsWith('combo')) {
        return (
          <Combo key={i} $w={Number(t.slice(5))}>
            <Select aria-label="Caso de carga" defaultValue="RF-FORM-FINDING"><option>RF-FORM-FINDING</option></Select>
            <ComboArrow><Caret /></ComboArrow>
          </Combo>
        );
      }
      const n = t.replace(/[*~]$/, '');
      return <ToolButton key={i} $on={t.endsWith('*')} $off={t.endsWith('~')} aria-label={n}><Icon n={n} s={18} /></ToolButton>;
    })}
  </>
);

const row1 = [
  ': new open cabY cabB save note print preview | undo redo | para selA selB selC selD | listV* grid* | newLoad combo216 prev next eyeLoad xxxGray eyeRes* xxxRes* | glasses abacusWin abacus',
  ': handGrid snap planeA planeB planeC* guide lineGrid | copy rotate mirror redX info camera gears',
  ': ifcA ifcB impA impB',
];
const row2 = [
  ': newNode v newLine newMember v newPoly v | supNode supLine supSurf | dim v dimXX gridNew | surf v opening v fold v solid solidNew v | combi v loadNode loadA loadB loadC loadD v',
  ': hand zoomBox zoomX wire wires | vx vy vz vmy v scope v | block v',
  ': frameN roller | deform rainbow* cubeRes reaction slice quad v moment cells | panel* starTool v colors v',
];

/* ---------- docks ---------- */

const Main = styled.main`
  flex: 1;
  min-height: 0;
  display: grid;
  grid-template-columns: 298px minmax(0, 1fr) 158px;
  column-gap: 4px;
`;
const Dock = styled.section`
  display: flex;
  flex-direction: column;
  min-height: 0;
  min-width: 0;
`;
const DockHeader = styled.div`
  height: 20px;
  flex: none;
  display: flex;
  align-items: center;
  gap: 8px;
  padding: 0 6px 2px 4px;
  background: #b9bfca;
  border-top: 1px solid #eef1f7;
  color: #44474d;
`;
const DockTitle = styled.h2`
  margin: 0;
  font: inherit;
  flex: 1;
`;
const DockHead = ({ children }: { children: ReactNode }) => (
  <DockHeader>
    <DockTitle>{children}</DockTitle>
    <Plain aria-label="Fijar"><svg width="8" height="9"><path d="M2.5 0v5.5M6.5 0v5.5M2 .5h4M0 5.5h8M4.5 6v3" stroke="#6c7078" fill="none" /></svg></Plain>
    <Plain aria-label="Cerrar"><svg width="9" height="9"><path d="M1 1l7 7M8 1L1 8" stroke="#6c7078" strokeWidth="1.4" /></svg></Plain>
  </DockHeader>
);

/* ---------- tree ---------- */

const TreeFrame = styled.div`
  flex: 1;
  min-height: 0;
  margin-top: 1px;
  padding: 1px 3px 1px;
  display: flex;
  flex-direction: column;
  border: 1px solid #a4a9b6;
  border-bottom-color: #777;
  background: #f8f9fb;
`;
const TreeBox = styled.div`
  flex: 1;
  min-height: 0;
  display: grid;
  grid-template-columns: minmax(0, 1fr) 16px;
  border-top: 1px solid #9a9ea8;
`;
const TreeList = styled.ul`
  margin: 0;
  padding: 0 0 0 2px;
  list-style: none;
  overflow: hidden;
  background: #fdfcf4;
`;
const TreeRow = styled.li`
  display: flex;
  align-items: center;
  height: 18px;
  white-space: nowrap;
`;
const dotsV = 'repeating-linear-gradient(#7d7d7d 0 1px, transparent 1px 2px)';
const dotsH = 'repeating-linear-gradient(90deg, #7d7d7d 0 1px, transparent 1px 2px)';
const Guide = styled.span<{ $v: string; $h?: boolean }>`
  width: 19px;
  height: 18px;
  flex: none;
  display: flex;
  align-items: center;
  justify-content: center;
  background-repeat: no-repeat;
  background-image: ${dotsV}, ${dotsH};
  background-size: 1px ${p => p.$v}, ${p => (p.$h ? '10px' : '0')} 1px;
  background-position: 9px 0, 9px 9px;
`;
const Expander = styled.button`
  width: 9px;
  height: 9px;
  display: flex;
  align-items: center;
  justify-content: center;
  border: 1px solid #969696;
  background: #fdfdfd;
`;
const TreeLabel = styled.span<{ $strong?: boolean }>`
  padding: 0 0 2px 6px;
  font-weight: ${p => (p.$strong ? 700 : 400)};
`;

type TreeItem = [depth: number, mark: '' | '+' | '-', icon: string, label: string];
const tree: TreeItem[] = [
  [0, '-', 'root', '1'],
  [1, '-', 'fOpen', 'Datos del modelo'],
  [2, '+', 'f:node', 'Nudos'],
  [2, '+', 'f:line', 'Líneas'],
  [2, '+', 'f:mat', 'Materiales'],
  [2, '+', 'f:surf', 'Superficies'],
  [2, '', 'f:solid', 'Sólidos'],
  [2, '', 'f:hole', 'Huecos'],
  [2, '', 'f:supN', 'Apoyos en nudos'],
  [2, '+', 'f:supL', 'Apoyos en línea'],
  [2, '', 'f:supS', 'Apoyos en superficie'],
  [2, '', 'f:hinge', 'Articulaciones lineales'],
  [2, '', 'f:slab', 'Espesores variables'],
  [2, '+', 'f:ortho', 'Superficies ortótropas y membranas'],
  [2, '', 'f:section', 'Secciones'],
  [2, '', 'f:rodH', 'Articulaciones en barras'],
  [2, '', 'f:rod', 'Excentricidades de barra'],
  [2, '', 'f:line', 'Divisiones de barra'],
  [2, '', 'f:rod', 'Barras'],
  [2, '', 'f:hinge', 'Nervios'],
  [2, '', 'f:elastic', 'Apoyos elásticos en barra'],
  [2, '', 'f:nonlin', 'No linealidades de barra'],
  [2, '', 'f:set', 'Conjuntos de barras'],
  [2, '', 'f:inter', 'Intersecciones de superficies'],
  [2, '', 'f:mesh', 'Refinamientos de malla de EF'],
  [2, '', 'f:none', 'Liberaciones de nudos'],
  [2, '', 'f:none', 'Tipos de liberaciones de líneas'],
  [2, '', 'f:hinge', 'Liberaciones de líneas'],
  [2, '', 'f:relS', 'Tipos de liberaciones de superficies'],
  [2, '', 'f:relS', 'Liberaciones de superficies'],
  [2, '', 'f:none', 'Unión de dos barras'],
  [2, '', 'f:none', 'Uniones'],
  [2, '', 'f:coac', 'Coacciones en nudo'],
  [1, '-', 'fOpen', 'Casos de carga y combinaciones'],
  [2, '', 'loadCase', 'Casos de carga'],
  [2, '', 'combG', 'Combinaciones de carga'],
  [2, '', 'combB', 'Combinaciones de resultados'],
  [1, '', 'f:none', 'Cargas'],
  [1, '+', 'f:none', 'Resultados'],
  [1, '', 'f:none', 'Secciones'],
  [1, '', 'f:none', 'Regiones medias'],
  [1, '', 'f:none', 'Informes'],
  [1, '+', 'f:none', 'Objetos auxiliares'],
  [1, '-', 'fOpen', 'Módulos adicionales'],
  [2, '', 'm', 'RF-STEEL Surfaces - Análisis general'],
  [2, '', 'm:', 'RF-STEEL Members - Análisis genera'],
  [2, '', 'm:EC', 'RF-STEEL EC3 - Cálculo de barras de'],
  [2, '', 'm:AISC', 'RF-STEEL AISC - Diseño de barras de'],
  [2, '', 'm:IS', 'RF-STEEL IS - Cálculo de barras de ac'],
  [2, '', 'm:SIA', 'RF-STEEL SIA - Cálculo de barras de a'],
  [2, '', 'm:BS', 'RF-STEEL BS - Cálculo de barras de a'],
  [2, '', 'm:GB', 'RF-STEEL GB - Cálculo de barras de a'],
  [2, '', 'm:CSA', 'RF-STEEL CSA - Cálculo de barras de'],
  [2, '', 'm:AS', 'RF-STEEL AS - Cálculo de barras de a'],
];
const lastChild = (i: number) => i + 1 < tree.length && tree[i][0] === 2 && tree[i + 1][0] < 2;

/* ---------- scroll bars ---------- */

const VBar = styled.div`
  display: flex;
  flex-direction: column;
  background: #f0f0f0;
`;
const HBar = styled.div`
  height: 17px;
  flex: none;
  display: flex;
  background: #f0f0f0;
  padding-right: 18px;
`;
const ScrollButton = styled.button`
  width: 16px;
  height: 17px;
  flex: none;
  display: flex;
  align-items: center;
  justify-content: center;
`;
const Track = styled.div<{ $row?: boolean; $pad?: boolean }>`
  flex: 1;
  min-height: 0;
  display: flex;
  flex-direction: ${p => (p.$row ? 'row' : 'column')};
  padding-top: ${p => (p.$pad ? 16 : 0)}px;
`;
const Thumb = styled.div<{ $part: string }>`
  flex: 0 0 ${p => p.$part};
  background: #cdcdcd;
`;
const Chevron = ({ d }: { d: string }) => <svg width="9" height="9" aria-hidden="true"><path d={d} stroke="#505050" strokeWidth="2" fill="none" /></svg>;
const up = 'M1 6.5l3.5-3.5L8 6.5';
const down = 'M1 3l3.5 3.5L8 3';
const left = 'M6.5 1L3 4.5 6.5 8';
const right = 'M3 1l3.5 3.5L3 8';

const NavTabs = styled.div`
  height: 24px;
  flex: none;
  display: flex;
  align-items: flex-start;
  padding-left: 5px;
  gap: 6px;
  color: #46536b;
`;
const NavTab = styled.button<{ $on?: boolean }>`
  height: 21px;
  display: flex;
  align-items: center;
  gap: 2px;
  padding: 0 3px 0 1px;
  ${p => p.$on && css`
    background: #f3f5f6;
    border: 1px solid #b8e4e8;
    border-top: 0;
    border-radius: 0 0 3px 3px;
  `}
`;

/* ---------- model view ---------- */

const Center = styled.div`
  display: flex;
  flex-direction: column;
  min-height: 0;
  min-width: 0;
`;
const View = styled.div`
  position: relative;
  flex: 1;
  min-height: 0;
  margin-top: 1px;
  background: #fff;
  border: 1px solid #f4f4f4;
  border-top: 2px solid #6c6c6c;
  border-left: 2px solid #6c6c6c;
`;
const Caption = styled.p<{ $bottom?: boolean }>`
  position: absolute;
  left: 4px;
  ${p => (p.$bottom ? 'bottom: 5px;' : 'top: 4px;')}
  margin: 0;
  font: 11px/14px ${GRID};
`;
const Scene = styled.svg`
  display: block;
  width: 100%;
  height: 100%;
`;

const palette = ['#bf0000', '#ff0000', '#ffa900', '#cfcf00', '#ffff00', '#00ff00', '#00e584', '#00f5f5', '#009aff', '#0000ff', '#00009f'];
const levels = [339, 368, 398, 427, 456, 486, 515, 545, 574, 604, 633, 663];
const CX = 1475;
const half = [81, 89, 98, 109, 121, 134, 148, 163, 180, 199, 220, 243];
const halfAt = (y: number) => {
  const t = ((y - 339) / 324) * 11;
  const i = Math.min(10, Math.floor(t));
  return half[i] + (half[i + 1] - half[i]) * (t - i);
};
const meshRows = [339, 383, 425, 464, 502, 538, 571, 604, 634, 663];
const ratio = [0, 0.309, 0.588, 0.809, 0.951, 1];
const meshPath = (() => {
  let d = '';
  for (const s of [-1, 1]) {
    for (let k = 0; k < 6; k++) {
      meshRows.forEach((y, j) => {
        const x = CX + s * ratio[k] * halfAt(y);
        d += `${j ? 'L' : 'M'}${x.toFixed(1)} ${y}`;
      });
      if (k < 5) {
        for (let j = 0; j < 9; j++) {
          const a = meshRows[j], b = meshRows[j + 1];
          d += `M${(CX + s * ratio[k] * halfAt(a)).toFixed(1)} ${a}L${(CX + s * ratio[k + 1] * halfAt(b)).toFixed(1)} ${b}`;
        }
      }
    }
  }
  meshRows.slice(1, -1).forEach(y => { d += `M${CX - halfAt(y)} ${y + 0.5}H${CX + halfAt(y)}`; });
  return d;
})();

/* half widths of the thin column at each contour level */
const waist = [9, 9, 7.5, 6, 4.5, 3, 2.5, 3.5, 5, 6.5, 7.5, 8];
const MX = 664.5;

const Pin = ({ x, y, double, bare }: { x: number; y: number; double?: boolean; bare?: boolean }) => (
  <g transform={`translate(${x} ${y})`} fill="#00ff00" fillOpacity=".5">
    {!bare && <circle cx="0" cy="6" r="6" />}
    <path d="M-1 5h2l9.5 11.5h-6.5V27h-8V16.5h-6.5z" />
    {double && <><circle cx="1" cy="6" r="5.5" /><path d="M0 5l8 11.5H5V27h-6V16.5h-8z" /></>}
  </g>
);

const Model = () => (
  <Scene viewBox="304 102 1453 708" role="img" aria-label="Modelo con líneas de contorno">
    <g fill="#000080" fontFamily="Roboto, sans-serif" fontSize="11" fontWeight="700" textAnchor="middle">
      <text x="662" y="183">Método estándar</text>
      <text x="1475" y="180">Método de proyacción</text>
    </g>

    {[589.5, 607.5, 722, 739.5].map(x => <Pin key={x} x={x} y={339} />)}
    {[633.5, 695.5].map(x => <Pin key={x} x={x} y={339} bare />)}
    {[492.7, 522, 602, 664.5, 727, 807, 836].map(x => <Pin key={x} x={x} y={663} />)}
    {[431.5, 897.6].map(x => <Pin key={x} x={x} y={663} double />)}
    <path d="M583.5 339H746L674.5 352H655z" fill="#bf0000" />
    <path d="M583.5 339L655 352M746 339L674.5 352M600 339l60 10M620 339l40 10M640 339l22 11M730 339l-60 10M710 339l-40 10M690 339l-22 11M664.5 339v14" stroke="#a9a0a0" strokeDasharray="1 1" fill="none" />
    {palette.map((c, i) => {
      const y0 = i ? levels[i] : 350;
      const y1 = levels[i + 1];
      return <path key={c} d={`M${MX - waist[i]} ${y0}H${MX + waist[i]}L${MX + waist[i + 1]} ${y1}H${MX - waist[i + 1]}z`} fill={c} />;
    })}
    <path d="M421.5 662.5L504 660.5l60-3.5 52-5 40-11h17l40 11 52 5 60 3.5 83 2z" fill="#00009f" />
    <path d="M421.5 662.5L504 660.5l60-3.5 52-5 40-11M908 662.5L825 660.5l-60-3.5-52-5-40-11M470 662l146-7 40-9M859 662l-146-7-40-9M560 661l96-12M770 661l-97-12M500 661.5h330M560 658.5h210M600 655.5h130" stroke="#8f93b4" strokeDasharray="1 1" fill="none" />
    <path d="M655.5 352L662.5 500 661.5 540 656 641M674 352L666.5 500 667.5 540 673 641" stroke="#a0a0a0" strokeWidth="2" fill="none" />
    <path d="M659 352L664 510 660 641M670 352L665 510 669 641M664.5 352V641" stroke="#a8a8a8" strokeDasharray="1 1" fill="none" />
    <path d="M664.5 490V540" stroke="#a0a0a0" strokeWidth="3" opacity=".7" />
    {levels.slice(1, -1).map((y, i) => <path key={y} d={`M${MX - waist[i + 1]} ${y + 0.5}H${MX + waist[i + 1]}`} stroke="#7a2020" opacity=".8" />)}
    <path d="M583 339.5h163M421 663.5h487" stroke="#222" strokeDasharray="16 2 5 2" />
    <path d="M745.5 339L908 663" stroke="#000" strokeWidth="1.2" />
    <path d="M664.5 663V632" stroke="#0000e0" strokeWidth="2" />
    <path d="M665 663h34" stroke="#f00" strokeWidth="2" />
    <path d="M696 660l9 3-9 3z" fill="#c00000" />
    <circle cx="664.5" cy="663" r="3" fill="#00e000" />
    <g fill="#808000"><rect x="582" y="337" width="3" height="4" /><rect x="663" y="337" width="3" height="3" /><rect x="420" y="661" width="3" height="4" /></g>
    <g fill="#900000"><rect x="744" y="337" width="4" height="4" /><rect x="906" y="661" width="4" height="4" /></g>

    <path d="M359 700V664" stroke="#0000e0" strokeWidth="2" />
    <path d="M356 669l3-11 3 11z" fill="#000090" />
    <path d="M359 700h34" stroke="#f00" strokeWidth="2" />
    <path d="M391 697l9 3-9 3z" fill="#b00000" />
    <circle cx="359" cy="700" r="3" fill="#00e000" />
    <g fontFamily="Roboto, sans-serif" fontSize="10" textAnchor="middle">
      <text x="359" y="654" fill="#0000e0">Z</text>
      <text x="409" y="704" fill="#e00000">X</text>
      <text x="716" y="667" fill="#e00000">X</text>
    </g>

    {palette.map((c, i) => (
      <path key={c} d={`M${CX - half[i]} ${levels[i]}H${CX + half[i]}L${CX + half[i + 1]} ${levels[i + 1]}H${CX - half[i + 1]}z`} fill={c} />
    ))}
    {levels.slice(1, -1).map((y, i) => <path key={y} d={`M${CX - half[i + 1]} ${y + 0.5}H${CX + half[i + 1]}`} stroke="#701010" opacity=".85" />)}
    <path d={meshPath} stroke="#a8a8a8" strokeDasharray="1 1" fill="none" />
    <path d="M1394 339.5h162M1232 663.5h486" stroke="#333" strokeDasharray="16 2 5 2" />
    {[1416.5, 1533.5].map(x => (
      <g key={x} fill="#5a7c00"><circle cx={x} cy="344.5" r="5" /><path d={`M${x} 346l7.5 9h-15z`} /></g>
    ))}
    {[1303, 1332, 1412, 1475, 1538, 1618, 1647].map(x => <Pin key={x} x={x} y={663} />)}
    {[1242, 1708].map(x => <Pin key={x} x={x} y={663} double />)}
    <path d="M1556.5 339L1718 663" stroke="#000" strokeWidth="1.2" />
    <g fill="#808000"><rect x="1392" y="337" width="3" height="3" /><rect x="1473" y="337" width="3" height="3" /><rect x="1231" y="661" width="3" height="4" /></g>
    <g fill="#900000"><rect x="1555" y="337" width="3" height="4" /><rect x="1717" y="661" width="3" height="4" /></g>
  </Scene>
);

/* ---------- result table ---------- */

const ResultDock = styled(Dock)`
  height: 323px;
  flex: none;
  margin-top: 5px;
`;
const ResultTools = styled.div`
  height: 25px;
  flex: none;
  display: flex;
  align-items: center;
  padding: 0 0 1px 9px;
  background: ${strip};
`;
const Sheet = styled.div`
  flex: none;
  height: 242px;
  display: grid;
  grid-template-columns: minmax(0, 1fr) 16px;
  align-items: start;
  padding: 1px 3px 0 2px;
  background: #f0f0f0;
  border: 1px solid #666;
  border-bottom: 2px solid #808080;
  font: 11px/14px ${GRID};
`;
const SheetBar = styled(VBar)`
  height: 224px;
  border-right: 1px solid #a0a0a0;
`;
const Table = styled.table`
  width: 100%;
  table-layout: fixed;
  border-spacing: 0;
  white-space: nowrap;
  th, td {
    height: 16px;
    padding: 0;
    overflow: hidden;
    border-right: 1px solid #a0a0a0;
    border-bottom: 1px solid #a0a0a0;
    font-weight: 400;
    line-height: 14px;
  }
`;
const Letter = styled.th<{ $on?: boolean }>`
  && {
    height: 15px;
    line-height: 12px;
    background: ${p => (p.$on ? '#0078d7' : '#e1e1e1')};
    color: ${p => (p.$on ? '#fff' : '#000')};
    border-top: 1px solid #808080;
    border-right-color: #666;
    border-bottom-color: #666;
  }
`;
const Name = styled.th` && { height: 17px; background: #f0f0f0; } `;
const Corner = styled.th`
  && {
    background: #e1e1e1;
    border-left: 1px solid #808080;
    border-top: 1px solid #808080;
    border-right-color: #666;
    border-bottom-color: #666;
  }
`;
const Blank = styled.td<{ $head?: boolean }>`
  && {
    border-right: 0;
    background: ${p => (p.$head ? '#e1e1e1' : '#f0f0f0')};
    ${p => p.$head && 'height: 15px; border-top: 1px solid #a0a0a0;'}
  }
`;
const RowHead = styled.th<{ $on?: boolean }>`
  && {
    background: ${p => (p.$on ? '#0078d7' : '#e1e1e1')};
    border-left: 1px solid #808080;
    border-right-color: #555;
    border-bottom-color: #666;
    box-shadow: inset 1px 1px #fff;
  }
`;
const Cell = styled.td<{ $tint?: boolean; $num?: boolean }>`
  && {
    background: ${p => (p.$tint ? '#f8faff' : '#fff')};
    text-align: ${p => (p.$num ? 'right' : 'left')};
    padding: ${p => (p.$num ? '0 4px 0 0' : '0 0 0 4px')};
  }
`;
const Group = styled.td`
  && {
    background: #fff;
    outline: 1px dotted #000;
    outline-offset: -1px;
    padding-left: 3px;
  }
`;
const GroupName = styled.div`
  display: flex;
  align-items: center;
  gap: 4px;
  font: 700 12px/14px "Liberation Sans", sans-serif;
`;
const Description = styled.div`
  display: flex;
  align-items: center;
  height: 15px;
`;
const Branch = styled.span`
  width: 12px;
  height: 15px;
  margin: 0 8px 0 3px;
  border-left: 1px solid #d4d4d4;
  background: linear-gradient(#c8c8c8, #c8c8c8) 0 7px / 12px 1px no-repeat;
`;

const results: [string, string, string, string][] = [
  ['Carga total en dirección X', '0.00', 'kN', ''],
  ['Suma de esfuerzos en apoyos en X', '0.00', 'kN', ''],
  ['Carga total en dirección Y', '0.00', 'kN', ''],
  ['Suma de esfuerzos en apoyos en Y', '0.00', 'kN', ''],
  ['Carga total en dirección Z', '0.00', 'kN', ''],
  ['Suma de esfuerzos en apoyos en Z', '0.00', 'kN', ''],
  ['Resultante de reacciones respecto a X', '0.000', 'kNm', 'En el centro de gravedad del modelo (X: 0.000, Y: 0.000, Z: 0.000 mm)'],
  ['Resultante de reacciones respecto a Y', '0.000', 'kNm', 'En el centro de gravedad del modelo'],
  ['Resultante de reacciones respecto a Z', '0.000', 'kNm', 'En el centro de gravedad del modelo'],
  ['Máximo desplazamiento en dirección X', '-1564.3', 'mm', 'Nudo de malla de EF núm. 61  (X: 102.3,  Y: -14.3,  Z: 269.3 mm)'],
  ['Máximo desplazamiento en dirección Y', '-1592.2', 'mm', 'Nudo de malla de EF núm. 76  (X: -0.9,  Y: 74.5,  Z: 315.6 mm)'],
];
const tinted = [0, 1, 4, 5];

const Comment = styled.span` white-space: pre; `;

const SheetTabs = styled.div`
  flex: 1;
  display: flex;
  align-items: flex-start;
  background: #f0f0f0;
  font: 11px/14px ${GRID};
`;
const SheetTab = styled.button<{ $on?: boolean }>`
  height: 17px;
  padding: 0 1px 0 2px;
  border: 1px solid #666;
  border-top: 0;
  border-left: 0;
  border-radius: 0 0 4px 4px;
  white-space: nowrap;
  background: ${p => (p.$on ? '#fff' : '#e6e6e6')};
`;
const Pager = styled.button`
  width: 16px;
  height: 17px;
  flex: none;
  display: flex;
  align-items: center;
  justify-content: center;
  background: #f4f4f4;
  border: 1px solid;
  border-color: #fff #777 #777 #fff;
`;
const sheets = ['Resultados - Resumen', 'Nudos - Deformaciones', 'Líneas - Esfuerzos en apoyos', 'Superficies - Deformaciones locales', 'Superficies - Forma', 'Superficies - Deformaciones globales', 'Superficies - Esfuerzos internos básicos', 'Superficies - Esfuerzos internos principales'];
const pagers: [string, string, string][] = [
  ['Primera', 'M1 0h2v8H1zM8 0v8L4 4z', '#a0a0a0'],
  ['Anterior', 'M6 0v8L2 4z', '#a0a0a0'],
  ['Siguiente', 'M2 0v8l4-4z', '#000'],
  ['Última', 'M0 0v8l4-4zM5 0h2v8H5z', '#000'],
];

/* ---------- legend panel ---------- */

const PanelBody = styled.div`
  flex: 1;
  min-height: 0;
  display: flex;
  flex-direction: column;
  padding: 3px 3px 3px 5px;
  background: #f0f0f0;
  border: 1px solid #a4a9b6;
  border-bottom-color: #777;
`;
const PanelText = styled.p<{ $grid?: boolean }>`
  margin: 0;
  font: 11px/17px ${p => (p.$grid ? GRID : UI)};
`;
const LegendBox = styled.div`
  display: flex;
  height: 216px;
  margin: 0 3px 0 0;
  padding-left: 37px;
  background: #faf6ee;
  border: 1px solid #fff;
  border-top-color: #999;
  border-left-color: #999;
`;
const LegendBar = styled.svg`
  width: 34px;
  height: 190px;
  margin-top: 10px;
`;
const LegendValues = styled.ol`
  margin: 2px 0 0;
  padding: 0;
  width: 36px;
  list-style: none;
  text-align: right;
  line-height: 17px;
`;
const Extremes = styled.dl`
  display: grid;
  grid-template-columns: 30px 42px;
  align-content: center;
  margin: 9px 3px 0 0;
  padding-left: 36px;
  height: 36px;
  line-height: 17px;
  background: #f0f4fb;
  border: 1px solid #d4dcf4;
  border-right-color: #a4a4e0;
  border-bottom-color: #a4a4e0;
  dd { margin: 0; text-align: right; }
  dt { white-space: pre; }
`;
const PanelTool = styled.button`
  align-self: flex-end;
  margin: 136px 0 0;
  width: 25px;
  height: 21px;
  display: flex;
  align-items: center;
  justify-content: center;
  background: #e1e1e1;
  border: 1px solid #adadad;
`;
const PanelTabs = styled(NavTabs)` padding-left: 4px; gap: 6px; `;
const PanelTab = styled(NavTab)` width: 24px; padding: 0; justify-content: center; `;
const values = ['4000.0', '3636.4', '3272.7', '2909.1', '2545.5', '2181.8', '1818.2', '1454.5', '1090.9', '727.3', '363.6', '0.0'];

/* ---------- status bar ---------- */

const Status = styled.footer`
  height: 21px;
  flex: none;
  display: flex;
  align-items: stretch;
  padding: 1px 0;
  border-top: 1px solid #9fa5b0;
  background: linear-gradient(#d9dde5 0, #b9bfc9 9px, #a7adb8 10px, #b4bac4 100%);
  font: 12px/16px ${GRID};
  color: #30353e;
`;
const StatusKey = styled.button<{ $on?: boolean }>`
  display: flex;
  align-items: center;
  margin-right: 1px;
  padding: 0 1px 2px;
  border: 1px solid;
  border-color: ${p => (p.$on ? '#111 #eee #eee #111' : '#f2f2f2 #98a0ac #98a0ac #f2f2f2')};
  line-height: 14px;
`;
const StatusCell = styled.span<{ $w: number }>`
  width: ${p => p.$w}px;
  border-left: 1px solid #8d929c;
`;

const menus: [string, number][] = [['Archivo', 0], ['Edición', 0], ['Ver', 0], ['Insertar', 0], ['Cálculo', 0], ['Resultados', 0], ['Herramientas', 0], ['Tabla', 0], ['Opciones', 0], ['Módulos adicionales', 0], ['Ventana', 2], ['Ayuda', 1]];

export default function App() {
  return (
    <Window>
      <Global />
      <TitleBar>
        <Icon n="app" />
        <Title>RFEM 5.20.00 x64 - [1]</Title>
        <WindowButtons $gap={35}>
          <Plain aria-label="Minimizar"><svg width="11" height="11"><path d="M0 5.5h10" stroke="#000" /></svg></Plain>
          <Plain aria-label="Restaurar"><svg width="11" height="11"><path d="M.5 2.5h8v8h-8zM2.5 2.5v-2h8v8h-2" stroke="#000" fill="none" /></svg></Plain>
          <Plain aria-label="Cerrar"><svg width="11" height="11"><path d="M.5.5l10 10M10.5.5l-10 10" stroke="#000" /></svg></Plain>
        </WindowButtons>
      </TitleBar>
      <MenuBar>
        <MenuLogo><Icon n="bridge" s={18} /></MenuLogo>
        {menus.map(([m, k]) => <MenuItem key={m}>{m.slice(0, k)}<u>{m[k]}</u>{m.slice(k + 1)}</MenuItem>)}
        <Spacer />
        <WindowButtons $gap={7}>
          <Plain aria-label="Minimizar documento"><svg width="9" height="9"><path d="M1 7h7" stroke="#666" strokeWidth="2" /></svg></Plain>
          <Plain aria-label="Restaurar documento"><svg width="9" height="9"><path d="M2 1.5h6.5v5M.5 3.5h6v4h-6z" stroke="#666" fill="none" /></svg></Plain>
          <Plain aria-label="Cerrar documento"><svg width="9" height="9"><path d="M1 1l7 7M8 1L1 8" stroke="#777" strokeWidth="2" /></svg></Plain>
        </WindowButtons>
      </MenuBar>
      <ToolRow>{row1.map(s => <ToolStrip key={s}><ToolItems spec={s} /></ToolStrip>)}</ToolRow>
      <ToolRow>{row2.map(s => <ToolStrip key={s}><ToolItems spec={s} /></ToolStrip>)}</ToolRow>

      <Main>
        <Dock>
          <DockHead>Navegador de proyectos - Datos</DockHead>
          <TreeFrame>
            <TreeBox>
              <TreeList>
                {tree.map(([depth, mark, icon, label], i) => (
                  <TreeRow key={i}>
                    {depth > 0 && <Guide $v="0" />}
                    {depth > 1 && <Guide $v="100%" />}
                    <Guide $v={depth === 0 || lastChild(i) ? '9px' : '100%'} $h>
                      {mark && (
                        <Expander aria-label={mark === '+' ? 'Expandir' : 'Contraer'}>
                          <svg width="7" height="7"><path d={mark === '+' ? 'M1 3.5h5M3.5 1v5' : 'M1 3.5h5'} stroke="#2b3f90" /></svg>
                        </Expander>
                      )}
                    </Guide>
                    <Icon n={icon} />
                    <TreeLabel $strong={depth === 0}>{label}</TreeLabel>
                  </TreeRow>
                ))}
              </TreeList>
              <VBar>
                <ScrollButton aria-label="Subir"><Chevron d={up} /></ScrollButton>
                <Track $pad><Thumb $part="46%" /></Track>
                <ScrollButton aria-label="Bajar"><Chevron d={down} /></ScrollButton>
              </VBar>
            </TreeBox>
            <HBar>
              <ScrollButton aria-label="Izquierda"><Chevron d={left} /></ScrollButton>
              <Track $row><Thumb $part="42%" /></Track>
              <ScrollButton aria-label="Derecha"><Chevron d={right} /></ScrollButton>
            </HBar>
          </TreeFrame>
          <NavTabs>
            <NavTab $on><Icon n="mDatos" />Datos</NavTab>
            <NavTab><Icon n="mMostrar" />Mostrar</NavTab>
            <NavTab><Icon n="mVistas" />Vistas</NavTab>
            <NavTab><Icon n="rainbow" />Resultados</NavTab>
          </NavTabs>
        </Dock>

        <Center>
          <View>
            <Model />
            <Caption>Forma Líneas de contorno [mm]<br />RF-FORM-FINDING</Caption>
            <Caption $bottom>Máx.Líneas de contorno: 4000.0, Mín. Líneas de contorno: 0.0 mm</Caption>
          </View>
          <ResultDock>
            <DockHead>4.0 Resultados - Resumen</DockHead>
            <ResultTools>
              <ToolItems spec="tA tB tC tD* tE | tL tR | hookA* hookB* | rowsB rowsY | combo134 | prevD nextD | filter | infoG | chart~ | excel | calc" />
            </ResultTools>
            <Sheet>
              <Table>
                <colgroup>
                  <col width="46" /><col width="287" /><col width="72" /><col width="48" /><col width="397" /><col />
                </colgroup>
                <thead>
                  <tr><Corner rowSpan={2} /><Letter $on>A</Letter><Letter>B</Letter><Letter>C</Letter><Letter>D</Letter><Blank $head /></tr>
                  <tr><Name>Descripción</Name><Name>Valor</Name><Name>Unidad</Name><Name>Comentario</Name><Blank /></tr>
                </thead>
                <tbody>
                  <tr>
                    <RowHead $on />
                    <Group colSpan={4}>
                      <GroupName>
                        <svg width="9" height="9"><path d="M.5.5h8v8h-8zM2 4.5h5" stroke="#000" fill="#fff" /></svg>
                        RF-FORM-FINDING
                      </GroupName>
                    </Group>
                    <Blank />
                  </tr>
                  {results.map(([name, value, unit, note], i) => {
                    const tint = tinted.includes(i);
                    return (
                      <tr key={name}>
                        <RowHead />
                        <Cell $tint={tint}><Description><Branch />{name}</Description></Cell>
                        <Cell $tint={tint} $num>{value}</Cell>
                        <Cell $tint={tint}>{unit}</Cell>
                        <Cell $tint={tint}><Comment>{note}</Comment></Cell>
                        <Blank />
                      </tr>
                    );
                  })}
                </tbody>
              </Table>
              <SheetBar>
                <ScrollButton aria-label="Subir"><Chevron d={up} /></ScrollButton>
                <Track><Thumb $part="54px" /></Track>
                <ScrollButton aria-label="Bajar"><Chevron d={down} /></ScrollButton>
              </SheetBar>
            </Sheet>
            <SheetTabs>
              {sheets.map((s, i) => <SheetTab key={s} $on={i === 0}>{s}</SheetTab>)}
              <Spacer />
              {pagers.map(([n, d, c]) => <Pager key={n} aria-label={n}><svg width="8" height="8"><path d={d} fill={c} /></svg></Pager>)}
            </SheetTabs>
          </ResultDock>
        </Center>

        <Dock>
          <DockHead>Panel</DockHead>
          <PanelBody>
            <PanelText>Forma</PanelText>
            <PanelText $grid>Líneas de contorno [mm]</PanelText>
            <LegendBox>
              <LegendBar viewBox="0 0 34 190" aria-hidden="true">
                {palette.map((c, i) => <rect key={c} x=".5" y={i * 17 + 0.5} width="26" height="17" fill={c} stroke="#000" />)}
                {values.map((v, i) => <path key={v} d={`M26 ${i * 17 + 0.5}h7`} stroke="#000" />)}
              </LegendBar>
              <LegendValues>{values.map(v => <li key={v}>{v}</li>)}</LegendValues>
            </LegendBox>
            <Extremes>
              <dt>Máx :</dt><dd>4000.0</dd>
              <dt>Mín  :</dt><dd>0.0</dd>
            </Extremes>
            <PanelTool aria-label="Buscar"><Icon n="listLens" /></PanelTool>
          </PanelBody>
          <PanelTabs>
            <PanelTab $on aria-label="Leyenda"><Icon n="legend" /></PanelTab>
            <PanelTab aria-label="Factores"><Icon n="scale" /></PanelTab>
            <PanelTab aria-label="Filtro"><Icon n="micro" /></PanelTab>
          </PanelTabs>
        </Dock>
      </Main>

      <Status>
        <Spacer />
        {['FORZC', 'REJILLA', 'CARTES', 'REFENT', 'GLN', 'DXF'].map((k, i) => <StatusKey key={k} $on={i !== 1 && i !== 3}>{k}</StatusKey>)}
        <StatusCell $w={189} /><StatusCell $w={88} /><StatusCell $w={74} /><StatusCell $w={74} /><StatusCell $w={73} />
      </Status>
    </Window>
  );
}
